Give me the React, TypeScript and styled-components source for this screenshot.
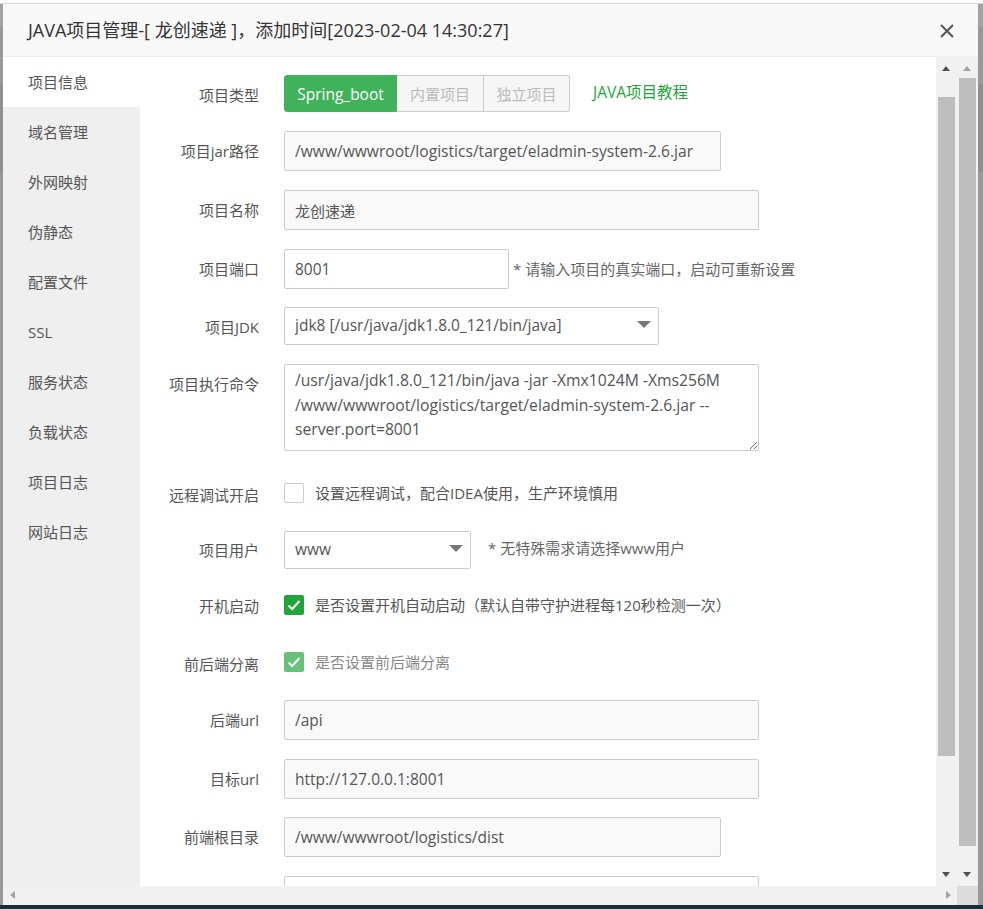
import React from 'react';
import styled, { createGlobalStyle } from 'styled-components';

const GlobalStyle = createGlobalStyle`
  html, body {
    margin: 0;
    padding: 0;
    height: 100%;
    overflow: hidden;
    background: #999;
  }
  * {
    box-sizing: border-box;
  }
  body, input, select, textarea, button {
    font-family: 'Open Sans', 'Noto Sans CJK SC', sans-serif;
  }
`;

const Page = styled.div`
  width: 983px;
  height: 909px;
  display: flex;
  flex-direction: column;
  background: #999;
`;

const TopEdge = styled.div`
  height: 4px;
  background: #fff;
  border-bottom: 1px solid #d8d8d8;
  flex: none;
`;

const Backdrop = styled.div`
  flex: 1;
  min-height: 0;
  padding: 0 5px 0 3px;
  display: flex;
  background: linear-gradient(#a2a2a2 0 23px, #999 23px 80px, #8f8f8f 80px 168px, #999 168px);
`;

const BottomEdge = styled.div`
  height: 4px;
  background: #1c2d3a;
  flex: none;
`;

const Modal = styled.div`
  flex: 1;
  min-width: 0;
  display: flex;
  flex-direction: column;
  background: #fff;
`;

const Header = styled.div`
  height: 53px;
  flex: none;
  display: flex;
  align-items: center;
  justify-content: space-between;
  padding: 0 23px 0 25px;
  background: #f8f8f8;
  border-bottom: 1px solid #eee;
`;

const Title = styled.h1`
  margin: 0;
  font-size: 18px;
  font-weight: 400;
  color: #333;
  position: relative;
  top: -1px;
`;

const CloseIcon = styled.svg`
  width: 16px;
  height: 16px;
  position: relative;
  top: 1px;
`;

const Middle = styled.div`
  flex: 1;
  min-height: 0;
  display: flex;
`;

const Sidebar = styled.ul`
  width: 137px;
  flex: none;
  margin: 0;
  padding: 0;
  list-style: none;
  background: #efefef;
`;

const SideItem = styled.li<{ $active?: boolean }>`
  height: 50px;
  padding-left: 25px;
  line-height: 50px;
  font-size: 15px;
  color: #555;
  background: ${(p) => (p.$active ? '#fff' : 'transparent')};
`;

const Content = styled.div`
  flex: 1;
  min-width: 0;
  overflow: hidden;
  padding-top: 18px;
`;

const Row = styled.div<{ $gap: number; $height: number; $top?: boolean }>`
  display: flex;
  align-items: ${(p) => (p.$top ? 'flex-start' : 'center')};
  height: ${(p) => p.$height}px;
  margin-bottom: ${(p) => p.$gap}px;
`;

const Label = styled.label<{ $drop?: number }>`
  width: 119px;
  flex: none;
  margin-right: 25px;
  text-align: right;
  font-size: 15px;
  line-height: 20px;
  color: #555;
  white-space: nowrap;
  transform: translateY(${(p) => p.$drop ?? 0}px);
`;

const TextInput = styled.input<{ $width: number; $muted?: boolean; $size?: number }>`
  width: ${(p) => p.$width}px;
  height: 100%;
  padding: 0 10px;
  font-size: ${(p) => p.$size ?? 15.5}px;
  color: #555;
  border: 1px solid #ccc;
  border-radius: 2px;
  outline: none;
  background: ${(p) => (p.$muted ? '#f9f9f9' : '#fff')};
`;

const CommandArea = styled.textarea`
  width: 475px;
  height: 87px;
  padding: 3px 10px;
  font-size: 15.7px;
  line-height: 24.5px;
  color: #555;
  border: 1px solid #ccc;
  border-radius: 2px;
  outline: none;
  background: #fff;
`;

const SelectWrap = styled.div<{ $width: number }>`
  position: relative;
  width: ${(p) => p.$width}px;
  height: 100%;
`;

const Select = styled.select`
  width: 100%;
  height: 100%;
  padding: 0 10px 3px;
  appearance: none;
  font-size: 15.5px;
  color: #555;
  border: 1px solid #ccc;
  border-radius: 2px;
  outline: none;
  background: #fff;
`;

const Caret = styled.span`
  position: absolute;
  right: 8px;
  top: 50%;
  margin-top: -5px;
  width: 0;
  height: 0;
  border-left: 7px solid transparent;
  border-right: 7px solid transparent;
  border-top: 7px solid #777;
  pointer-events: none;
`;

const Hint = styled.span<{ $offset: number; $lift: number }>`
  margin-left: ${(p) => p.$offset}px;
  font-size: 15px;
  color: #666;
  white-space: nowrap;
  transform: translateY(-${(p) => p.$lift}px);
`;

const TypeGroup = styled.div`
  display: flex;
  height: 100%;
`;

const TypeButton = styled.button<{ $active?: boolean; $width: number }>`
  width: ${(p) => p.$width}px;
  height: 100%;
  padding: 0;
  font-size: ${(p) => (p.$active ? 15.5 : 15)}px;
  color: ${(p) => (p.$active ? '#fff' : '#bbb')};
  background: ${(p) => (p.$active ? '#3fb25a' : '#f6f6f6')};
  border: 1px solid ${(p) => (p.$active ? '#3fb25a' : '#ccc')};
  border-left-width: ${(p) => (p.$active ? 1 : 0)}px;
  &:first-child {
    border-radius: 3px 0 0 3px;
  }
  &:last-child {
    border-radius: 0 3px 3px 0;
  }
`;

const TutorialLink = styled.a`
  margin-left: 23px;
  font-size: 15.5px;
  color: #20a53a;
  transform: translateY(-2px);
`;

const CheckBox = styled.span<{ $checked?: boolean; $disabled?: boolean }>`
  width: 20px;
  height: 20px;
  flex: none;
  display: inline-flex;
  align-items: center;
  justify-content: center;
  border-radius: 2px;
  border: 1px solid ${(p) => (p.$checked ? 'transparent' : '#ccc')};
  background: ${(p) => (p.$checked ? '#20a53a' : '#fff')};
  opacity: ${(p) => (p.$disabled ? 0.68 : 1)};
`;

const CheckText = styled.span<{ $disabled?: boolean }>`
  margin-left: 11px;
  font-size: 15px;
  color: ${(p) => (p.$disabled ? '#888' : '#555')};
  white-space: nowrap;
  transform: translateY(-1px);
`;

const VScroll = styled.div`
  width: 21px;
  flex: none;
  position: relative;
  background: #f1f1f1;
`;

const VThumb = styled.div<{ $top: number; $height: number }>`
  position: absolute;
  left: 2px;
  right: 2px;
  top: ${(p) => p.$top}px;
  height: ${(p) => p.$height}px;
  background: #bdbdbd;
`;

const Arrow = styled.span<{ $dir: 'up' | 'down' | 'left' | 'right'; $faded?: boolean }>`
  position: absolute;
  width: 0;
  height: 0;
  ${(p) => {
    const color = p.$faded ? '#a3a3a3' : '#505050';
    if (p.$dir === 'up') return `left: 6px; top: 9px; border: 4.5px solid transparent; border-top: 0; border-bottom: 5px solid ${color};`;
    if (p.$dir === 'down') return `left: 6px; bottom: 9px; border: 4.5px solid transparent; border-bottom: 0; border-top: 5px solid ${color};`;
    if (p.$dir === 'left') return `left: 7px; top: 5px; border: 4.5px solid transparent; border-left: 0; border-right: 5px solid ${color};`;
    return `right: 6px; top: 5px; border: 4.5px solid transparent; border-right: 0; border-left: 5px solid ${color};`;
  }}
`;

const HScrollRow = styled.div`
  height: 19px;
  flex: none;
  display: flex;
`;

const HTrack = styled.div`
  flex: 1;
  position: relative;
  background: #f1f1f1;
`;

const ScrollCorner = styled.div`
  width: 21px;
  flex: none;
  background: #dcdcdc;
`;

const menu = ['项目信息', '域名管理', '外网映射', '伪静态', '配置文件', 'SSL', '服务状态', '负载状态', '项目日志', '网站日志'];

function Tick() {
  return (
    <svg width="14" height="12" viewBox="0 0 14 12" fill="none">
      <path d="M1.5 6.5L5.2 10L12.5 2" stroke="#fff" strokeWidth="2" />
    </svg>
  );
}

export default function App() {
  return (
    <Page>
      <GlobalStyle />
      <TopEdge />
      <Backdrop>
        <Modal>
          <Header>
            <Title>JAVA项目管理-[ 龙创速递 ]，添加时间[2023-02-04 14:30:27]</Title>
            <CloseIcon viewBox="0 0 16 16" fill="none">
              <path d="M2 2L14 14M14 2L2 14" stroke="#555" strokeWidth="2" />
            </CloseIcon>
          </Header>
          <Middle>
            <Sidebar>
              {menu.map((name, i) => (
                <SideItem key={name} $active={i === 0}>{name}</SideItem>
              ))}
            </Sidebar>
            <Content>
              <Row $height={37} $gap={19}>
                <Label $drop={1}>项目类型</Label>
                <TypeGroup>
                  <TypeButton $active $width={113}>Spring_boot</TypeButton>
                  <TypeButton $width={87}>内置项目</TypeButton>
                  <TypeButton $width={86}>独立项目</TypeButton>
                </TypeGroup>
                <TutorialLink>JAVA项目教程</TutorialLink>
              </Row>
              <Row $height={40} $gap={19}>
                <Label>项目jar路径</Label>
                <TextInput $width={437} $muted $size={15.6} readOnly value="/www/wwwroot/logistics/target/eladmin-system-2.6.jar" />
              </Row>
              <Row $height={40} $gap={19}>
                <Label>项目名称</Label>
                <TextInput $width={475} $muted $size={15} readOnly value="龙创速递" />
              </Row>
              <Row $height={40} $gap={18}>
                <Label>项目端口</Label>
                <TextInput $width={225} readOnly value="8001" />
                <Hint $offset={4} $lift={1}>* 请输入项目的真实端口，启动可重新设置</Hint>
              </Row>
              <Row $height={38} $gap={19}>
                <Label $drop={1}>项目JDK</Label>
                <SelectWrap $width={375}>
                  <Select defaultValue="jdk8">
                    <option value="jdk8">jdk8 [/usr/java/jdk1.8.0_121/bin/java]</option>
                  </Select>
                  <Caret />
                </SelectWrap>
              </Row>
              <Row $height={87} $gap={32} $top>
                <Label $drop={10}>项目执行命令</Label>
                <CommandArea
                  readOnly
                  value="/usr/java/jdk1.8.0_121/bin/java -jar -Xmx1024M -Xms256M /www/wwwroot/logistics/target/eladmin-system-2.6.jar --server.port=8001"
                />
              </Row>
              <Row $height={20} $gap={28}>
                <Label $drop={2}>远程调试开启</Label>
                <CheckBox />
                <CheckText>设置远程调试，配合IDEA使用，生产环境慎用</CheckText>
              </Row>
              <Row $height={38} $gap={26}>
                <Label>项目用户</Label>
                <SelectWrap $width={187}>
                  <Select defaultValue="www">
                    <option value="www">www</option>
                  </Select>
                  <Caret />
                </SelectWrap>
                <Hint $offset={17} $lift={3}>* 无特殊需求请选择www用户</Hint>
              </Row>
              <Row $height={20} $gap={37}>
                <Label $drop={1}>开机启动</Label>
                <CheckBox $checked>
                  <Tick />
                </CheckBox>
                <CheckText>是否设置开机自动启动（默认自带守护进程每120秒检测一次）</CheckText>
              </Row>
              <Row $height={20} $gap={28}>
                <Label $drop={2}>前后端分离</Label>
                <CheckBox $checked $disabled>
                  <Tick />
                </CheckBox>
                <CheckText $disabled>是否设置前后端分离</CheckText>
              </Row>
              <Row $height={40} $gap={19}>
                <Label>后端url</Label>
                <TextInput $width={475} $muted readOnly value="/api" />
              </Row>
              <Row $height={40} $gap={18}>
                <Label>目标url</Label>
                <TextInput $width={475} $muted readOnly value="http://127.0.0.1:8001" />
              </Row>
              <Row $height={40} $gap={19}>
                <Label>前端根目录</Label>
                <TextInput $width={437} $muted readOnly value="/www/wwwroot/logistics/dist" />
              </Row>
              <Row $height={40} $gap={19}>
                <Label />
                <TextInput $width={475} readOnly value="" />
              </Row>
            </Content>
            <VScroll>
              <Arrow $dir="up" />
              <VThumb $top={40} $height={659} />
              <Arrow $dir="down" />
            </VScroll>
            <VScroll>
              <Arrow $dir="up" $faded />
              <VThumb $top={21} $height={768} />
              <Arrow $dir="down" />
            </VScroll>
          </Middle>
          <HScrollRow>
            <HTrack>
              <Arrow $dir="left" $faded />
              <Arrow $dir="right" $faded />
            </HTrack>
            <ScrollCorner />
          </HScrollRow>
        </Modal>
      </Backdrop>
      <BottomEdge />
    </Page>
  );
}
